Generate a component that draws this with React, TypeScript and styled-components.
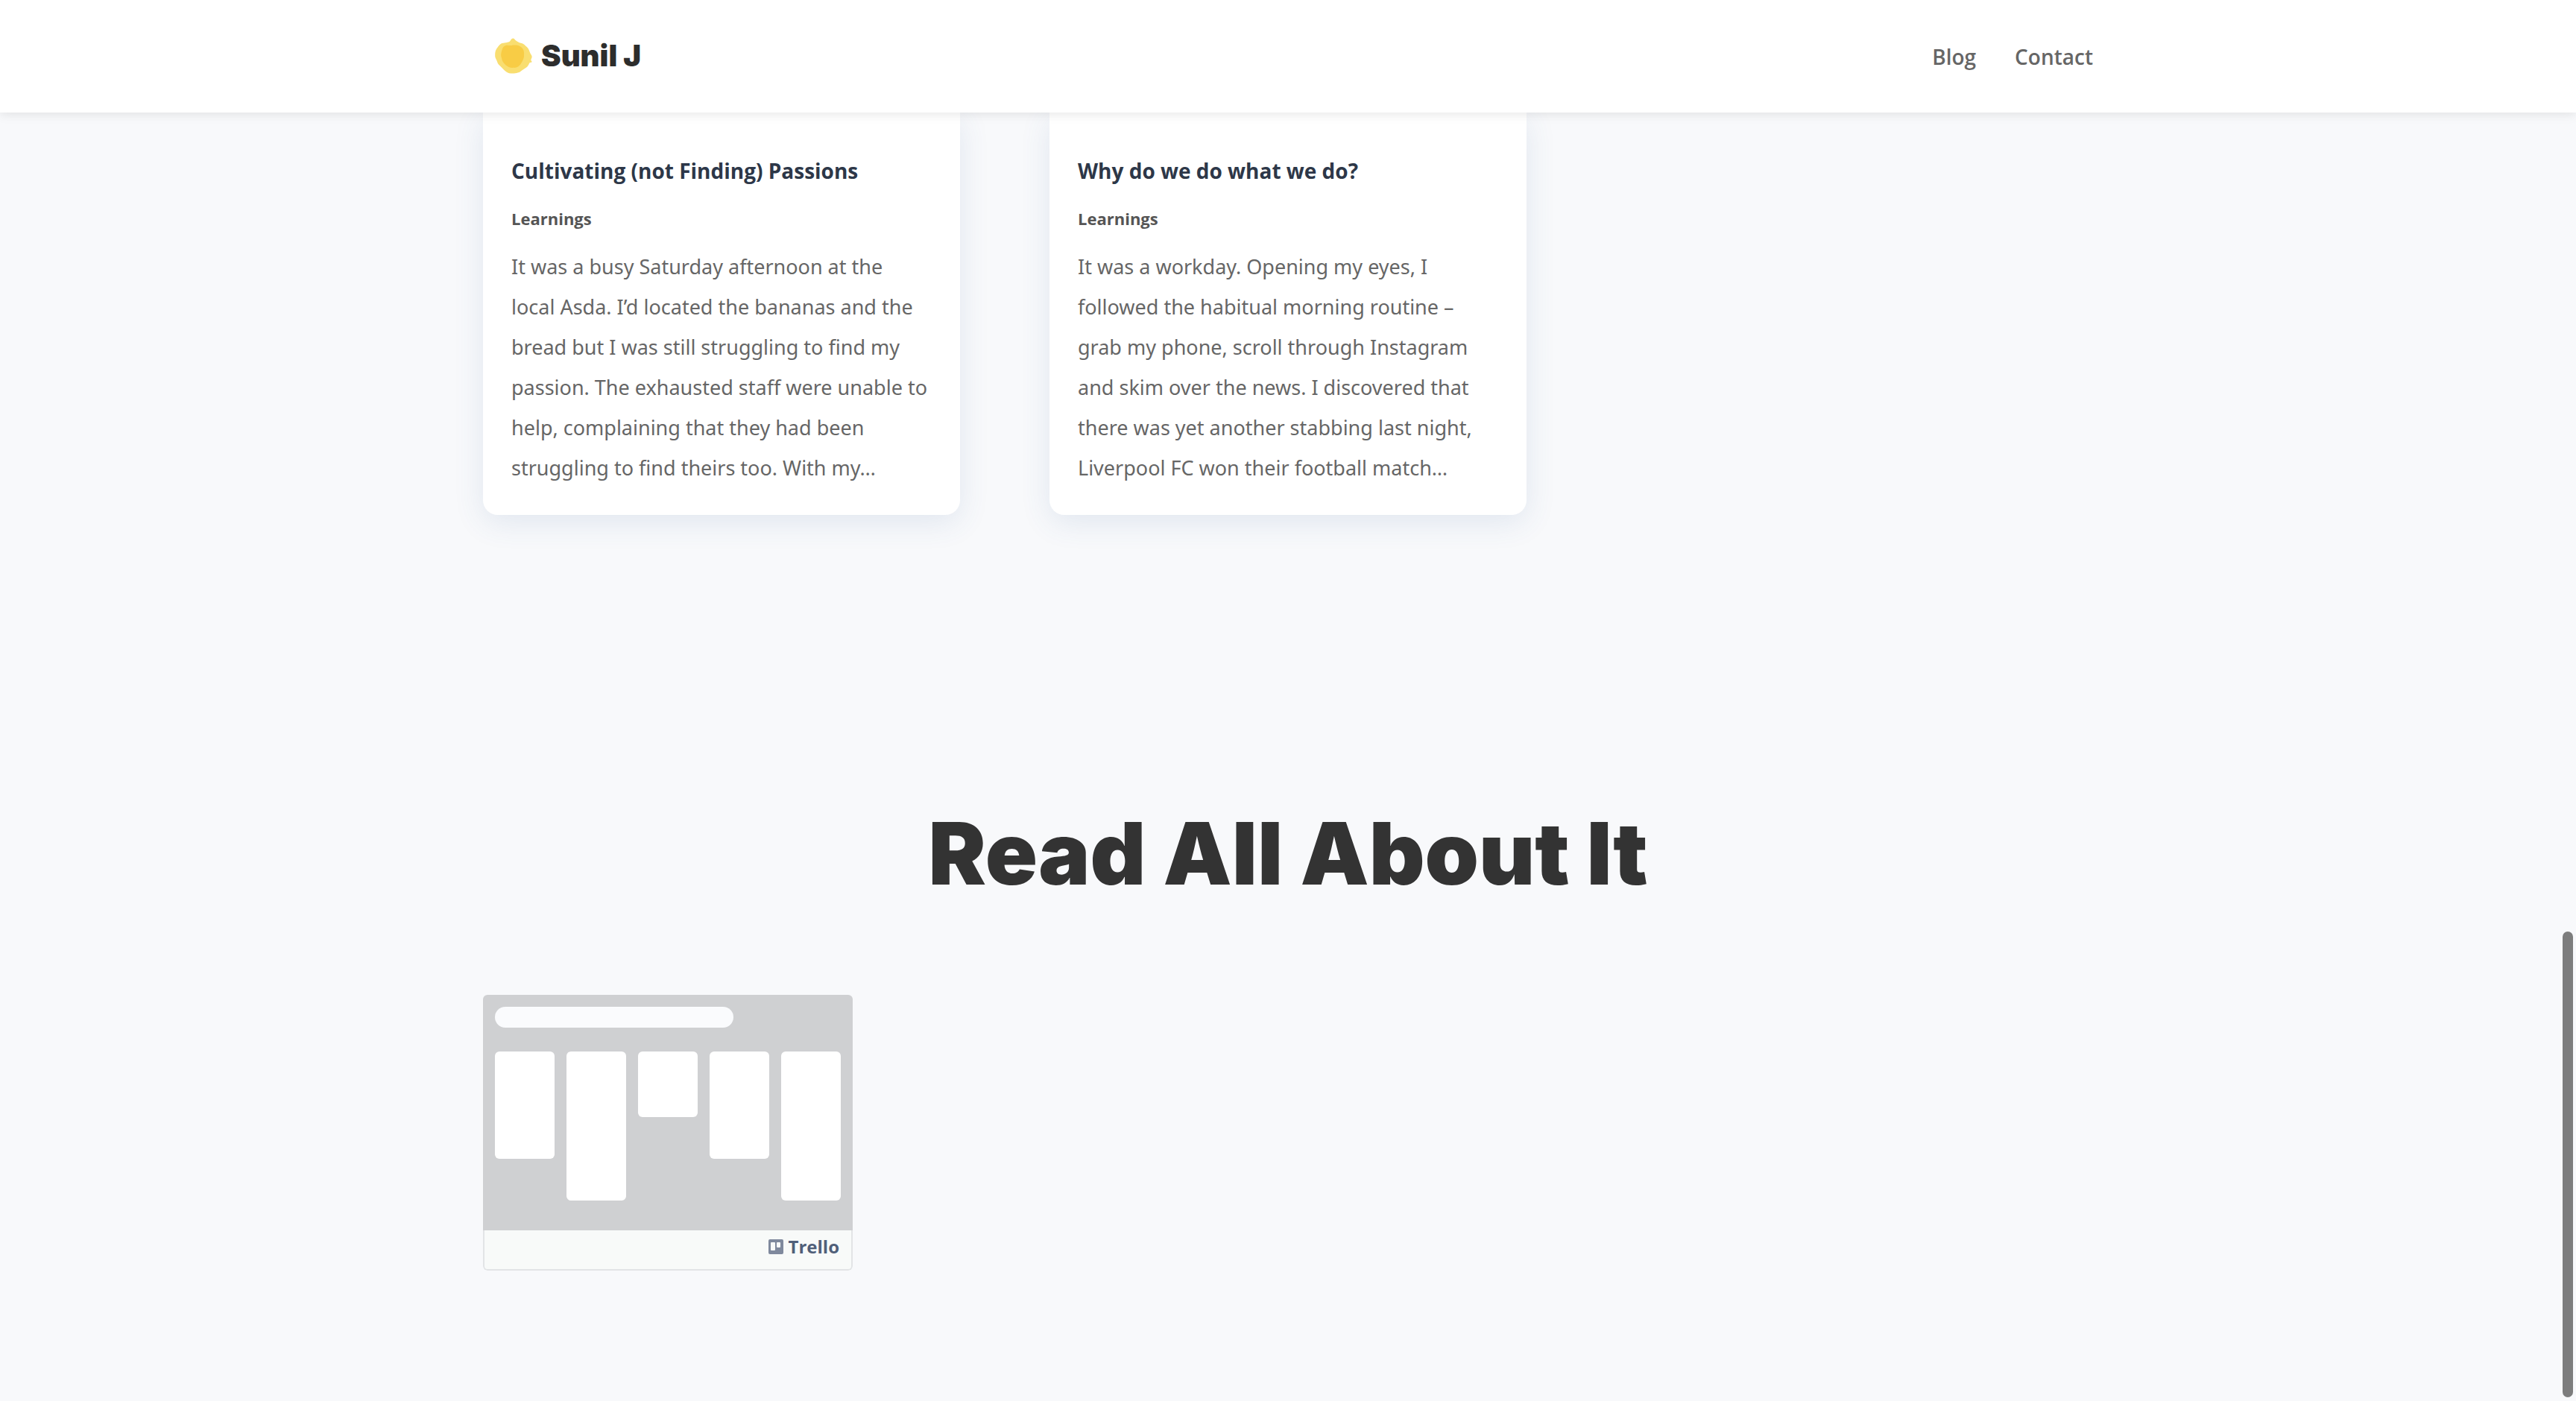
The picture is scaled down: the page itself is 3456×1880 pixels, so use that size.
import React from "react";
import styled, { createGlobalStyle } from "styled-components";

const GlobalStyle = createGlobalStyle`
  *, *::before, *::after { box-sizing: border-box; }
  html { overflow: hidden; }
  body {
    margin: 0;
    background: #f8f9fb;
    color: #666;
    font-family: "Open Sans", "Noto Sans", sans-serif;
    -webkit-font-smoothing: antialiased;
  }
  h1, h2, h3, p { margin: 0; }
  a { color: inherit; text-decoration: none; }
`;

const Page = styled.div`
  min-height: 100vh;
`;

const Header = styled.header`
  position: sticky;
  top: 0;
  z-index: 2;
  background: #fff;
  box-shadow: 0 2px 14px rgba(0, 0, 0, 0.1);
`;

const Container = styled.div`
  width: 100%;
  max-width: 2160px;
  margin: 0 auto;
`;

const HeaderBar = styled(Container)`
  display: flex;
  align-items: center;
  justify-content: space-between;
  height: 151px;
`;

const Brand = styled.a`
  display: flex;
  align-items: center;
  gap: 12px;
  padding: 0 0 2px 16px;
  color: #2d2d2d;
  font-family: Inter, sans-serif;
  font-size: 40px;
  font-weight: 900;
  line-height: 48px;
`;

const Sun = styled.svg`
  display: block;
  width: 50px;
  height: 48px;
`;

const Nav = styled.nav`
  display: flex;
  gap: 52px;
  color: #666;
  font-size: 28px;
  font-weight: 600;
  line-height: 40px;
`;

const Posts = styled(Container)`
  display: grid;
  grid-template-columns: repeat(3, minmax(0, 1fr));
  gap: 120px;
`;

const Card = styled.article`
  padding: 58px 38px 36px;
  background: #fff;
  border-radius: 0 0 20px 20px;
  box-shadow: 0 10px 40px rgba(60, 100, 160, 0.12);
`;

const CardTitle = styled.h2`
  color: #2d3748;
  font-size: 28px;
  font-weight: 700;
  line-height: 40px;
`;

const Category = styled.h3`
  margin-top: 24px;
  color: #555;
  font-size: 22px;
  font-weight: 700;
  line-height: 40px;
`;

const Excerpt = styled.p`
  margin-top: 18px;
  font-family: "Noto Sans", "Open Sans", sans-serif;
  font-size: 27px;
  line-height: 54px;
  white-space: pre;
`;

const Title = styled.h1`
  margin-top: 380px;
  color: #333;
  font-family: Inter, sans-serif;
  font-size: 116px;
  font-weight: 900;
  line-height: 148px;
  text-align: center;
`;

const Boards = styled(Container)`
  display: flex;
  margin-top: 116px;
  padding-bottom: 175px;
`;

const Board = styled.a`
  width: 496px;
  border-radius: 6px;
  overflow: hidden;
`;

const BoardPreview = styled.div`
  height: 316px;
  padding: 16px;
  background: #cfd0d2;
`;

const BoardName = styled.div`
  width: 320px;
  height: 28px;
  border-radius: 14px;
  background: #fafbfd;
`;

const Lists = styled.div`
  display: flex;
  align-items: flex-start;
  gap: 16px;
  margin-top: 32px;
`;

const List = styled.div<{ $size: number }>`
  flex: 1;
  height: ${(p) => p.$size}px;
  border-radius: 6px;
  background: #fff;
`;

const BoardFooter = styled.div`
  display: flex;
  align-items: center;
  justify-content: flex-end;
  gap: 7px;
  height: 54px;
  padding: 0 16px 8px;
  border: 2px solid #e2e4e6;
  border-top: 0;
  border-radius: 0 0 6px 6px;
  background: #f8faf9;
  color: #505f79;
  font-size: 24px;
  font-weight: 700;
  line-height: 32px;
`;

const TrelloMark = styled.svg`
  display: block;
  width: 20px;
  height: 20px;
`;

const ScrollThumb = styled.div`
  position: fixed;
  right: 4px;
  bottom: 5px;
  z-index: 3;
  width: 14px;
  height: 625px;
  border-radius: 7px;
  background: #7d7d7d;
`;

const posts = [
  {
    title: "Cultivating (not Finding) Passions",
    category: "Learnings",
    excerpt: [
      "It was a busy Saturday afternoon at the",
      "local Asda. I’d located the bananas and the",
      "bread but I was still struggling to find my",
      "passion. The exhausted staff were unable to",
      "help, complaining that they had been",
      "struggling to find theirs too. With my…",
    ],
  },
  {
    title: "Why do we do what we do?",
    category: "Learnings",
    excerpt: [
      "It was a workday. Opening my eyes, I",
      "followed the habitual morning routine –",
      "grab my phone, scroll through Instagram",
      "and skim over the news. I discovered that",
      "there was yet another stabbing last night,",
      "Liverpool FC won their football match…",
    ],
  },
];

const listSizes = [144, 200, 88, 144, 200];

export default function App() {
  return (
    <Page>
      <GlobalStyle />
      <Header>
        <HeaderBar>
          <Brand href="#home">
            <Sun viewBox="0 0 150 143" aria-hidden="true">
              <path
                fill="#f9de70"
                d="M72 1C66 1 64 9 60 13C52 19 36 18 25 22C17 27 12 36 6 44C0 54 0 66 1 76C3 84 8 88 10 98C13 107 20 110 27 118C35 127 45 138 57 141C68 143 82 143 92 139C102 138 106 130 114 126C122 121 130 118 134 110C138 105 137 99 143 98C149 99 150 95 147 92C143 88 147 84 149 76C149 68 144 66 141 58C138 48 133 38 124 32C117 24 110 20 101 19C94 17 87 12 81 7C79 3 76 0 72 1Z"
              />
              <path
                fill="#f8cc45"
                d="M42 30C52 26 62 32 72 28C84 27 96 28 104 35C114 42 119 54 117 68C118 82 110 94 104 104C98 114 86 121 74 119C62 120 52 115 43 108C34 100 28 92 27 80C22 68 26 56 29 46C31 38 35 32 42 30Z"
              />
            </Sun>
            Sunil J
          </Brand>
          <Nav>
            <a href="#blog">Blog</a>
            <a href="#contact">Contact</a>
          </Nav>
        </HeaderBar>
      </Header>

      <main>
        <Posts>
          {posts.map((post) => (
            <Card key={post.title}>
              <CardTitle>{post.title}</CardTitle>
              <Category>{post.category}</Category>
              <Excerpt>{post.excerpt.join("\n")}</Excerpt>
            </Card>
          ))}
        </Posts>

        <Title>Read All About It</Title>

        <Boards>
          <Board href="#trello" aria-label="Trello board">
            <BoardPreview>
              <BoardName />
              <Lists>
                {listSizes.map((size, i) => (
                  <List key={i} $size={size} />
                ))}
              </Lists>
            </BoardPreview>
            <BoardFooter>
              <TrelloMark viewBox="0 0 20 20" aria-hidden="true">
                <path
                  fill="#7f899d"
                  fillRule="evenodd"
                  d="M2 0H18A2 2 0 0 1 20 2V18A2 2 0 0 1 18 20H2A2 2 0 0 1 0 18V2A2 2 0 0 1 2 0ZM4 4A1 1 0 0 0 3 5V14A1 1 0 0 0 4 15H8A1 1 0 0 0 9 14V5A1 1 0 0 0 8 4ZM12 4A1 1 0 0 0 11 5V10A1 1 0 0 0 12 11H15A1 1 0 0 0 16 10V5A1 1 0 0 0 15 4Z"
                />
              </TrelloMark>
              Trello
            </BoardFooter>
          </Board>
        </Boards>
      </main>
      <ScrollThumb />
    </Page>
  );
}
